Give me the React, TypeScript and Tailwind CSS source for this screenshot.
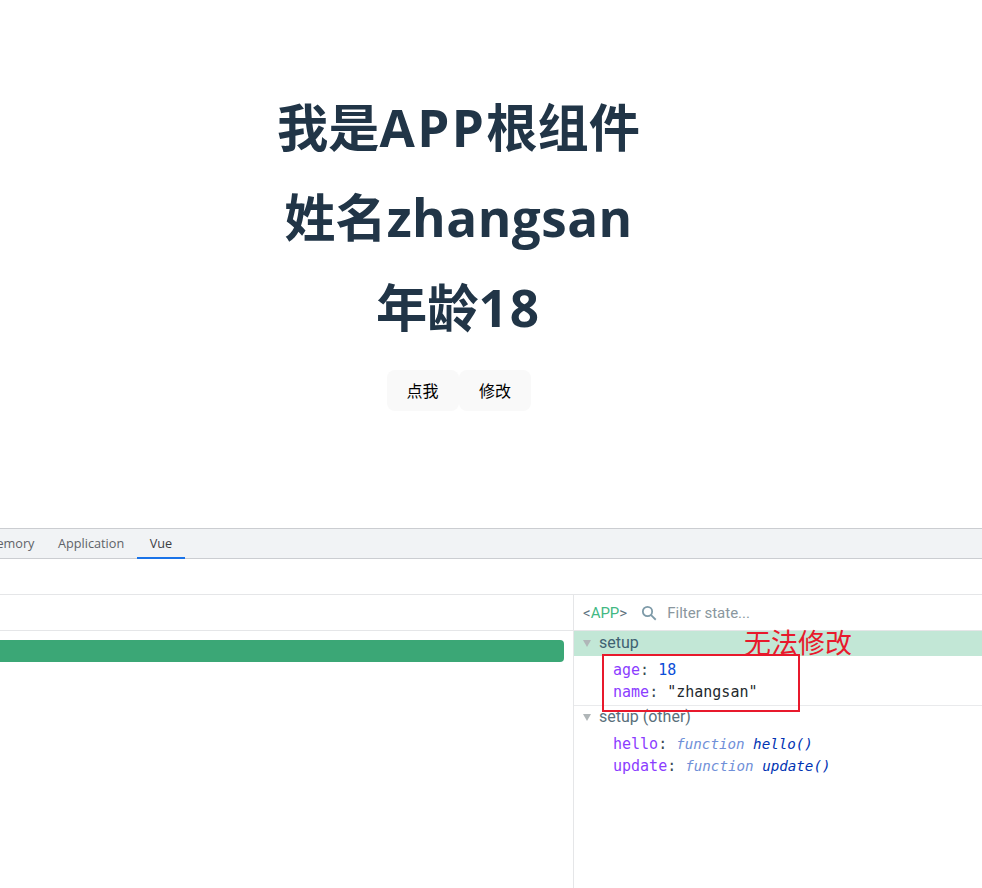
import React from "react";

const cjk = "font-['Open_Sans','Noto_Sans_CJK_SC',sans-serif]";
const mono = "font-['DejaVu_Sans_Mono','Liberation_Mono',monospace]";
const ui = "font-['Roboto','Noto_Sans',sans-serif]";
const tabs = "font-['Open_Sans','Noto_Sans',sans-serif]";

function Caret() {
  return (
    <svg width="8" height="7" viewBox="0 0 8 7" className="shrink-0">
      <path d="M0 0H8L4 7Z" fill="#b0b6b8" />
    </svg>
  );
}

function Prop({ name, children }: { name: string; children: React.ReactNode }) {
  return (
    <div className={`h-[22px] pl-[39px] text-[15px] leading-[22px] whitespace-pre ${mono}`}>
      <span className="text-[#8b3dff]">{name}</span>
      <span className="text-[#3a4a55]">: </span>
      {children}
    </div>
  );
}

function Fn({ name }: { name: string }) {
  return (
    <span className="text-[14.2px] italic">
      <span className="text-[#6f8fd8]">function </span>
      <span className="text-[#0033b3]">{name}()</span>
    </span>
  );
}

export default function App() {
  return (
    <div className={`relative h-[888px] w-[982px] overflow-hidden bg-white ${cjk}`}>
      <div className="flex h-[528px] flex-col items-center pr-[65px] pt-[97px] text-[#213547]">
        <h1 className="h-[60px] text-[51.2px] font-bold leading-[60px]">我是<span className="tracking-[2.4px]">APP</span>根组件</h1>
        <h2 className="mt-[30px] h-[60px] text-[51.2px] font-bold leading-[60px]">姓名<span className="tracking-[0.5px]">zhangsan</span></h2>
        <h2 className="mt-[30px] h-[60px] text-[51.2px] font-bold leading-[60px]">年龄<span className="tracking-[2px]">18</span></h2>
        <div className="mt-[33px] flex text-black">
          <button className="h-[41px] w-[72px] rounded-lg bg-[#f9f9f9] text-[16px]">点我</button>
          <button className="h-[41px] w-[72px] rounded-lg bg-[#f9f9f9] pl-px text-[16px]">修改</button>
        </div>
      </div>

      <div className={`flex h-[360px] flex-col ${ui}`}>
        <div className={`flex h-[31px] shrink-0 items-stretch border-y border-[#cbcdd1] bg-[#f1f3f5] pt-px text-[12.7px] text-[#5f6368] ${tabs}`}>
          <div className="-ml-[18px] flex w-[63px] items-center pl-[3px]">Memory</div>
          <div className="flex w-[92px] items-center whitespace-nowrap pl-[13px]">Application</div>
          <div className="-mb-px flex w-[48px] items-center justify-center border-b-2 border-[#1a73e8] text-[#3c4043]">Vue</div>
        </div>
        <div className="h-[36px] shrink-0 border-b border-[#e5e6e8]" />
        <div className="flex min-h-0 flex-1">
          <div className="w-[574px] shrink-0 border-r border-[#e5e6e8]">
            <div className="h-[36px] border-b border-[#e5e6e8]" />
            <div className="mr-[9px] mt-[9px] h-[22px] rounded-r-[4px] bg-[#3ba776]" />
          </div>
          <div className="min-w-0 flex-1">
            <div className="flex h-[36px] items-center border-b border-[#e5e6e8] pl-[9px] pt-px text-[15px]">
              <span className="text-[#5f7480]">&lt;</span>
              <span className="text-[#42b883]">APP</span>
              <span className="text-[#5f7480]">&gt;</span>
              <svg width="18" height="18" viewBox="0 0 24 24" className="ml-[13px]" fill="none" stroke="#7d9aa8" strokeWidth="2.4">
                <circle cx="10" cy="10" r="6.2" />
                <path d="M14.8 14.8L21 21" />
              </svg>
              <span className="ml-[9px] text-[#8a979e]">Filter state...</span>
            </div>
            <div className="flex h-[25px] items-center gap-[8px] bg-[#c2e7d6] pb-px pl-[9px] text-[16px] text-[#3f6272]">
              <Caret />
              <span>setup</span>
            </div>
            <div className="pt-[3px]">
              <Prop name="age"><span className="text-[#0b4ed8]">18</span></Prop>
              <Prop name="name"><span className="text-[#24292e]">"zhangsan"</span></Prop>
            </div>
            <div className="mt-[2px] border-t border-[#e9eaec]">
              <div className="flex h-[22px] items-center gap-[8px] pl-[9px] text-[16px] text-[#5a6f7b]">
                <Caret />
                <span>setup (other)</span>
              </div>
              <div className="pt-[5px]">
                <Prop name="hello"><Fn name="hello" /></Prop>
                <Prop name="update"><Fn name="update" /></Prop>
              </div>
            </div>
          </div>
        </div>
      </div>

      <div className="absolute left-[602px] top-[654px] h-[58px] w-[198px] border-2 border-[#e8192c]" />
      <div className={`absolute left-[744px] top-[625px] text-[27px] leading-[36px] text-[#e8192c] ${cjk}`}>无法修改</div>
    </div>
  );
}
